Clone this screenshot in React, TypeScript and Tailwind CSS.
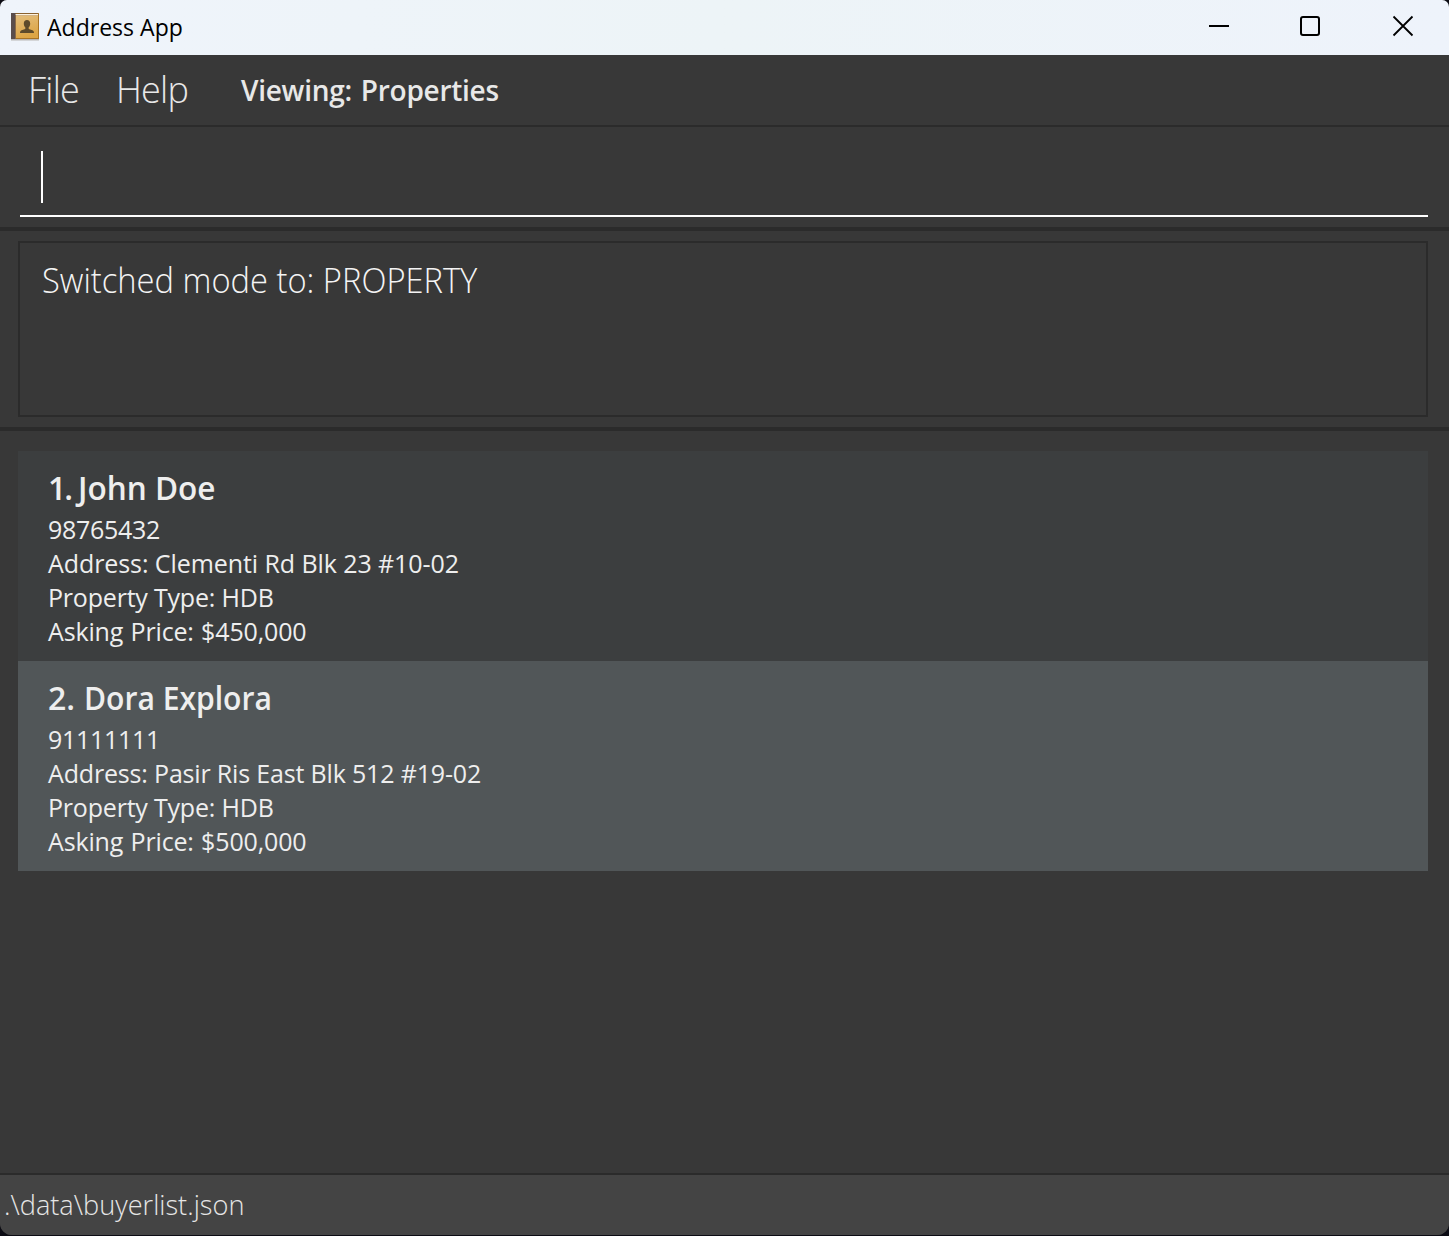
const people = [
  {
    index: '1.',
    indexCls: 'w-[30px] tracking-[-2px]',
    name: 'John Doe',
    nameCls: 'scale-x-[0.985]',
    lines: [
      { text: '98765432', cls: 'tracking-[-0.3px]' },
      { text: 'Address: Clementi Rd Blk 23 #10-02', cls: 'tracking-[-0.08px]' },
      { text: 'Property Type: HDB', cls: 'tracking-[-0.2px]' },
      { text: 'Asking Price: $450,000', cls: 'tracking-[-0.15px] [word-spacing:1px]' },
    ],
    bg: 'bg-[#3c3e3f]',
  },
  {
    index: '2.',
    indexCls: 'w-[36px]',
    name: 'Dora Explora',
    nameCls: 'scale-x-[0.94]',
    lines: [
      { text: '91111111', cls: 'tracking-[-0.3px]' },
      { text: 'Address: Pasir Ris East Blk 512 #19-02', cls: 'tracking-[-0.17px]' },
      { text: 'Property Type: HDB', cls: 'tracking-[-0.2px]' },
      { text: 'Asking Price: $500,000', cls: 'tracking-[-0.15px] [word-spacing:1px]' },
    ],
    bg: 'bg-[#515658]',
  },
];

function BookIcon() {
  return (
    <svg width="30" height="30" viewBox="0 0 30 30" className="mt-[-2px] shrink-0">
      <defs>
        <linearGradient id="cover" x1="0" y1="0" x2="0.3" y2="1">
          <stop offset="0" stopColor="#e2bd7c" />
          <stop offset="1" stopColor="#dda545" />
        </linearGradient>
      </defs>
      <rect x="1" y="27" width="28" height="1.5" fill="#b9b7b6" />
      <rect x="1" y="1" width="28" height="26" rx="0.5" fill="#a87324" />
      <rect x="5" y="1" width="23" height="1" fill="#8a6230" />
      <rect x="5" y="2" width="23" height="1.5" fill="#fbf1df" />
      <rect x="6" y="4" width="22" height="22" fill="url(#cover)" />
      <rect x="1" y="1" width="4.5" height="26" fill="#5a4d4b" />
      <rect x="5" y="3" width="1" height="24" fill="#8b6a45" />
      <path d="M17 8c2 0 3.200 1.300 3.200 3.400 0 1.700-.6 3-1.500 3.900v1.700l3.800 1.200c1 .4 1.500 1.200 1.500 2.800H10c0-1.600.5-2.400 1.500-2.800l3.800-1.200v-1.700c-.9-.9-1.500-2.200-1.500-3.900C13.800 9.300 15 8 17 8z" fill="#5d4a2b" />
    </svg>
  );
}

export default function App() {
  return (
    <div className="h-[1236px] w-[1449px] overflow-hidden bg-[#0c0c14] font-['Open_Sans',sans-serif] whitespace-nowrap">
      <div className="flex h-[1235px] flex-col overflow-hidden rounded-t-[7px] rounded-b-[12px] bg-[#383838]">
        <header className="flex h-[55px] shrink-0 items-center bg-gradient-to-r from-[#eff4fb] via-[#edf4f7] to-[#eef3fb] pl-[10px] text-black">
          <BookIcon />
          <span className="ml-[7px] origin-left scale-x-[0.96] pb-[2px] text-[24px] leading-[53px]">Address App</span>
          <div className="mr-[35px] ml-auto flex items-center">
            <svg width="22" height="22" viewBox="0 0 22 22" className="mt-[-3px] mr-[69px]"><path d="M1 11h20" stroke="#000" strokeWidth="2" /></svg>
            <svg width="22" height="22" viewBox="0 0 22 22" className="mt-[-3px] mr-[71px]"><rect x="2" y="2" width="18" height="18" rx="2" fill="none" stroke="#000" strokeWidth="2" /></svg>
            <svg width="22" height="22" viewBox="0 0 22 22" className="mt-[-3px]"><path d="M1.500 1.500l19 19M20.500 1.500l-19 19" stroke="#000" strokeWidth="1.800" /></svg>
          </div>
        </header>
        <nav className="flex h-[72px] shrink-0 items-center border-b-2 border-[#2b2b2b] pl-[28px] text-[36px] font-light text-[#e8e8e8]">
          <span className="w-[88px] tracking-[-0.8px]">File</span>
          <span className="w-[125px] tracking-[-0.8px]">Help</span>
          <span className="text-[28px] font-semibold tracking-[-0.27px] [word-spacing:2px]">Viewing: Properties</span>
        </nav>
        <section className="h-[104px] shrink-0 border-b-4 border-[#2b2b2b] px-5 pr-[21px]">
          <div className="flex h-[90px] items-center border-b-2 border-white pt-[12px] pl-[21px]">
            <div className="h-[52px] w-[2px] bg-white" />
          </div>
        </section>
        <section className="h-[200px] shrink-0 border-b-4 border-[#2b2b2b] pt-[10px] pr-[21px] pl-[18px]">
          <div className="h-[176px] border-2 border-[#2b2b2b] pt-[12px] pl-[22px] text-[35px] leading-[50px] font-light text-[#f4f4f4]">
            <p className="w-max origin-left scale-x-[0.934]">Switched mode to: PROPERTY</p>
          </div>
        </section>
        <main className="flex-1 pt-5 pr-[21px] pl-[18px] text-[#eeeeee]">
          {people.map((p) => (
            <article key={p.name} className={`h-[210px] pt-[15px] pl-[30px] ${p.bg}`}>
              <h2 className="flex text-[32px] leading-[44px] font-semibold">
                <span className={p.indexCls}>{p.index}</span>
                <span className={`origin-left ${p.nameCls}`}>{p.name}</span>
              </h2>
              <div className="pt-[2px] text-[25px] leading-[34px]">
                {p.lines.map((l) => (
                  <p key={l.text} className={l.cls}>{l.text}</p>
                ))}
              </div>
            </article>
          ))}
        </main>
        <footer className="flex h-[62px] shrink-0 items-center border-t-2 border-[#2b2b2b] bg-[#444444] pb-[2px] pl-[4px] text-[28px] font-light text-[#e6e6e6]">
          <span className="origin-left scale-x-[0.97]">.\data\buyerlist.json</span>
        </footer>
      </div>
    </div>
  );
}
